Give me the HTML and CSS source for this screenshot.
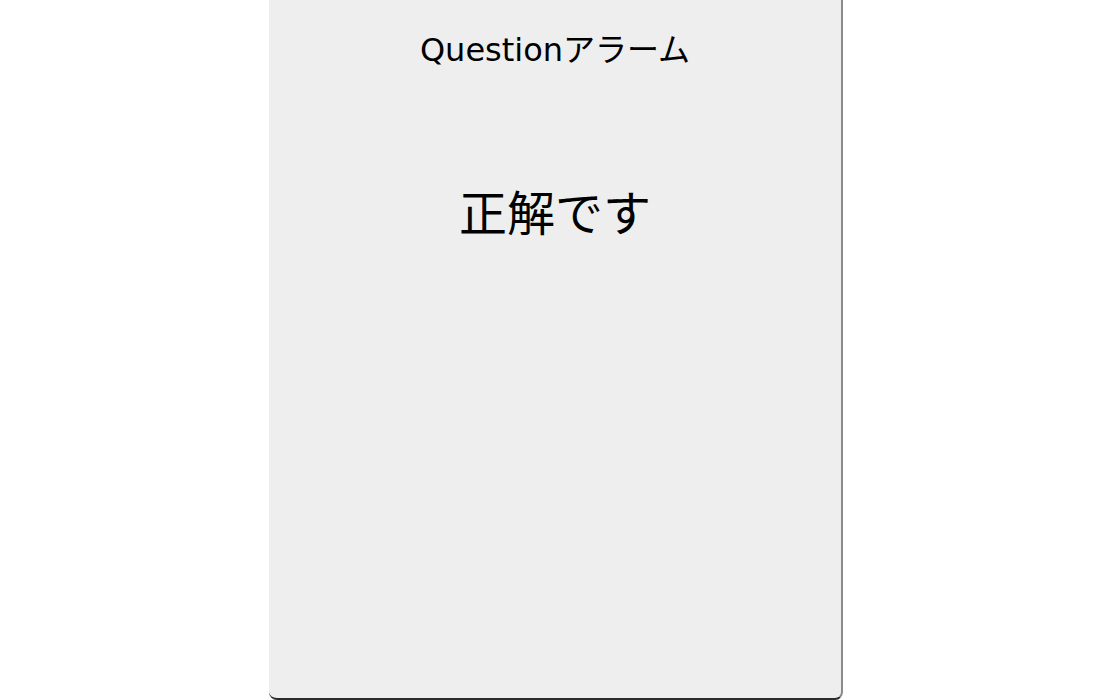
FILE: index.html
```html
<!DOCTYPE html>
<html lang="ja">
<head>
<meta charset="utf-8">
<link rel="stylesheet" href="styles.css">
</head>
<body>
<div class="stage">
  <div class="panel">
    <div class="title">Questionアラーム</div>
    <div class="message">正解です</div>
  </div>
</div>
</body>
</html>
```
FILE: styles.css
```css
html, body {
  margin: 0;
  padding: 0;
  background: #ffffff;
}
.stage {
  width: 1100px;
  height: 700px;
  display: flex;
  justify-content: center;
  padding-left: 12px;
  box-sizing: border-box;
}
.panel {
  width: 572px;
  height: 698px;
  background: #eeeeee;
  border-right: 2px solid #8a8a8a;
  border-bottom: 2px solid #2a2a2a;
  border-radius: 0 0 8px 8px;
  display: flex;
  flex-direction: column;
  align-items: center;
  font-family: "DejaVu Sans", "Noto Sans CJK JP", sans-serif;
  color: #000;
}
.title {
  margin-top: 28px;
  font-size: 32px;
  line-height: 44px;
}
.message {
  margin-top: 108px;
  font-family: "Noto Sans CJK JP", sans-serif;
  font-size: 48px;
  line-height: 60px;
}
```
